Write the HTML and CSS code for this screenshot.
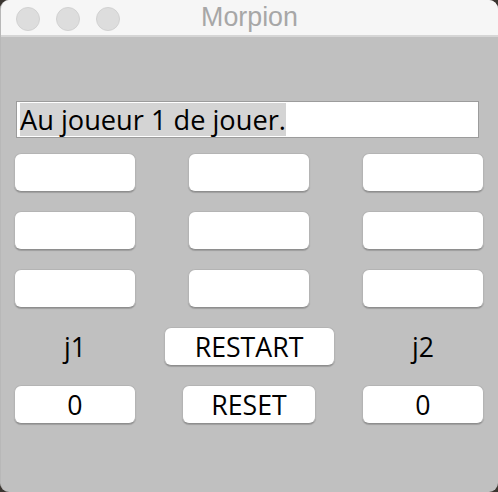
FILE: index.html
```html
<!DOCTYPE html>
<html lang="fr">
<head>
<meta charset="utf-8">
<title>Morpion</title>
<link rel="stylesheet" href="styles.css">
</head>
<body>
<div class="window">
  <div class="titlebar">
    <div class="lights">
      <span class="light"></span>
      <span class="light"></span>
      <span class="light"></span>
    </div>
    <div class="title">Morpion</div>
    <div></div>
  </div>
  <div class="content">
    <div class="field"><span class="sel">Au joueur 1 de jouer.</span></div>
    <div class="grid">
      <button class="btn"></button>
      <button class="btn"></button>
      <button class="btn"></button>
      <button class="btn"></button>
      <button class="btn"></button>
      <button class="btn"></button>
      <button class="btn"></button>
      <button class="btn"></button>
      <button class="btn"></button>
      <div class="label">j1</div>
      <button class="btn restart">RESTART</button>
      <div class="label">j2</div>
      <div class="btn score">0</div>
      <button class="btn reset">RESET</button>
      <div class="btn score">0</div>
    </div>
  </div>
</div>
</body>
</html>
```
FILE: styles.css
```css
html, body {
  margin: 0;
  padding: 0;
  background: #3b3631;
}
.window {
  width: 498px;
  height: 492px;
  background: #c0c0c0;
  border-radius: 9px;
  overflow: hidden;
  box-sizing: border-box;
  border-left: 1px solid #b8b8b8;
}
.titlebar {
  height: 35px;
  background: #f6f6f6;
  border-bottom: 2px solid #d6d6d6;
  display: grid;
  grid-template-columns: 1fr auto 1fr;
  align-items: center;
}
.lights {
  display: flex;
  gap: 16px;
  padding-left: 15px;
  padding-top: 1px;
}
.light {
  width: 22px;
  height: 22px;
  border-radius: 50%;
  background: #dddddd;
  border: 1px solid #d1d1d1;
}
.title {
  font-family: "Liberation Sans", Arial, sans-serif;
  font-size: 26.8px;
  line-height: 34px;
  color: #a7a7a7;
  padding-bottom: 2px;
}
.content {
  padding: 64px 0 0 13px;
}
.field {
  margin-left: 2px;
  width: 463px;
  height: 37px;
  box-sizing: border-box;
  border: 1px solid #9c9c9c;
  padding: 1px 3px;
  background: #ffffff;
  font-family: "Open Sans", sans-serif;
  font-size: 27.2px;
  color: #000;
}
.sel {
  display: inline-block;
  height: 33px;
  line-height: 33px;
  background: #d4d4d4;
  vertical-align: top;
  white-space: nowrap;
}
.grid {
  margin-top: 15px;
  display: grid;
  grid-template-columns: 122px 122px 122px;
  grid-auto-rows: 39px;
  column-gap: 52px;
  row-gap: 19px;
}
.btn {
  box-sizing: border-box;
  margin: 0;
  padding: 0;
  background: #ffffff;
  border: 1px solid #b4b4b4;
  border-bottom-color: #8e8e8e;
  border-radius: 7px;
  box-shadow: 0 1px 1px rgba(0, 0, 0, 0.18);
  font-family: "Open Sans", sans-serif;
  font-size: 26.7px;
  line-height: 35px;
  color: #000;
  text-align: center;
  display: flex;
  align-items: center;
  justify-content: center;
}
.restart {
  width: 171px;
  justify-self: center;
}
.reset {
  width: 134px;
  justify-self: center;
}
.label {
  font-family: "Open Sans", sans-serif;
  font-size: 26.7px;
  color: #000;
  display: flex;
  align-items: center;
  justify-content: center;
}
```
